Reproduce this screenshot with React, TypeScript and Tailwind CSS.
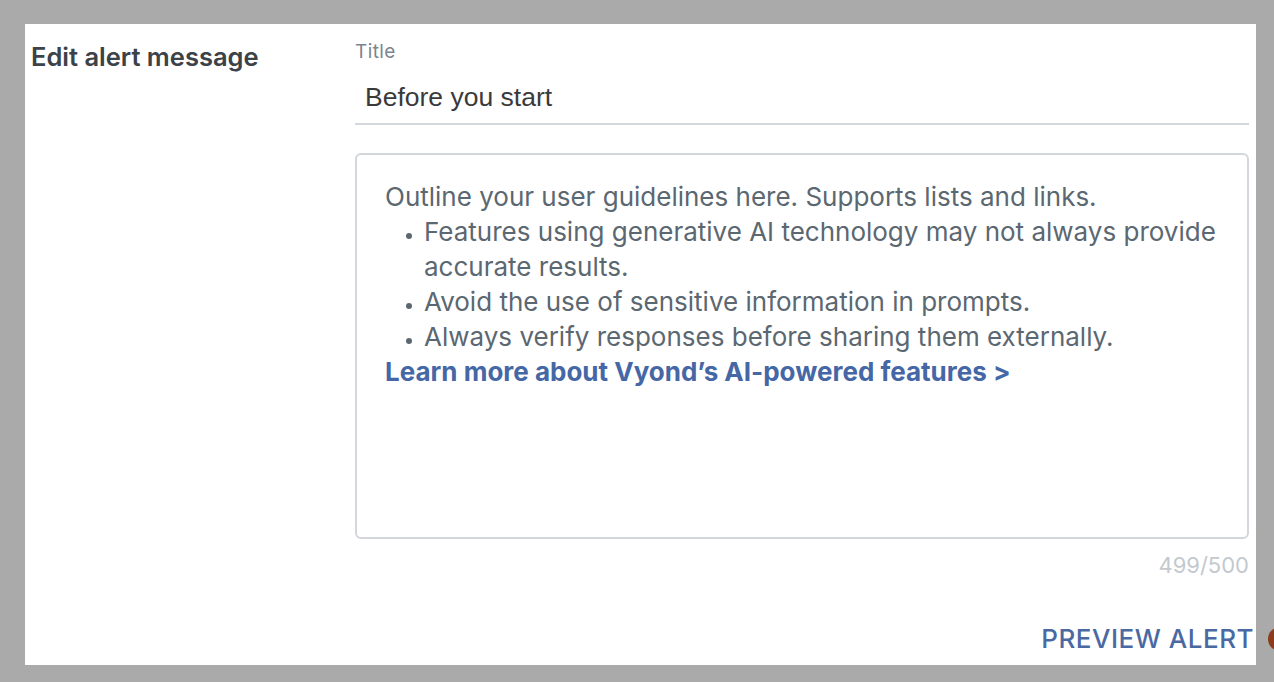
const sans = "font-['Inter','Lato',sans-serif]";

export default function App() {
  return (
    <main className="relative min-h-screen bg-[#aaaaaa] pl-[25px] pt-[24px]">
      <section className={`flex h-[641px] w-[1231px] bg-white pr-[7px] ${sans}`}>
        <div className="w-[330px] shrink-0 pl-[6px] pt-[16px]">
          <h2 className="text-[25.5px] font-semibold leading-[34px] text-[#3b4248]">Edit alert message</h2>
        </div>

        <div className="flex flex-1 flex-col">
          <label className="pt-[16px] text-[19px] leading-[24px] tracking-[0.02em] text-[#7b858d]">Title</label>
          <div className="border-b-2 border-[#d3d7db] pb-[11px] pl-[10px] pt-[18px]">
            <span className="block font-['Liberation_Sans',Arial,sans-serif] text-[26.5px] leading-[30px] text-[#3a3a3a]">
              Before you start
            </span>
          </div>

          <div className="mt-[28px] h-[386px] rounded-[6px] border-2 border-[#d3d7db] pl-[28px] pr-[12px] pt-[24px] text-[26px] leading-[35px] text-[#5b6771]">
            <p>Outline your user guidelines here. Supports lists and links.</p>
            <ul className="list-disc pl-[39px] marker:text-[18px]">
              <li>Features using generative AI technology may not always provide accurate results.</li>
              <li>Avoid the use of sensitive information in prompts.</li>
              <li>Always verify responses before sharing them externally.</li>
            </ul>
            <a href="#" className="font-bold text-[#4667a5]">
              Learn more about Vyond’s AI-powered features &gt;
            </a>
          </div>

          <p className="pt-[12px] text-right text-[22px] leading-[28px] text-[#c3c9ce]">499/500</p>

          <div className="mt-auto flex justify-end pb-[10px]">
            <button className="-mr-[5px] text-[26px] font-medium uppercase leading-[32px] tracking-[0.02em] text-[#4a69a3]">
              Preview alert
            </button>
          </div>
        </div>
      </section>
      <span className="absolute left-[1268px] top-[627px] h-[24px] w-[24px] rounded-full bg-[#8b3c1c]" />
    </main>
  );
}
